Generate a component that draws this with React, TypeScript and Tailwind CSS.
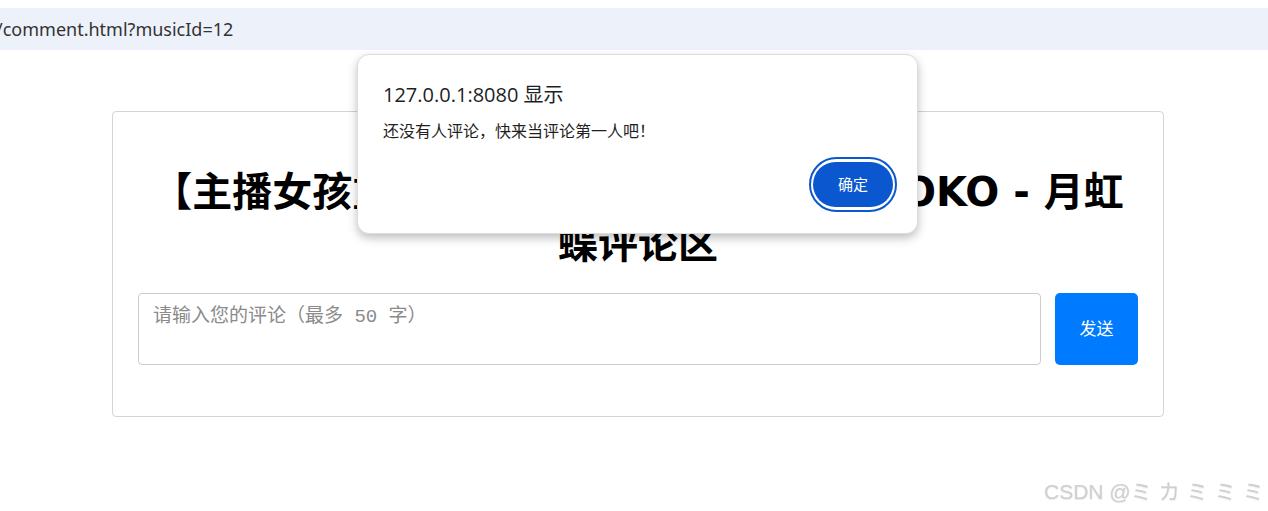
import { useState } from 'react';

export default function App() {
    const [comment, setComment] = useState('');

    return (
        <div className="relative w-[1268px] h-[511px] overflow-hidden bg-white font-['Noto_Sans','Noto_Sans_CJK_SC',sans-serif]">
            {/* address strip */}
            <div className="mt-[8px] h-[42px] bg-[#edf1fa] flex items-center overflow-hidden">
                <span className="-ml-[4px] text-[18px] text-[#333] whitespace-nowrap">/comment.html?musicId=12</span>
            </div>

            {/* comment card */}
            <div className="ml-[112px] mt-[61px] w-[1052px] h-[306px] border border-[#d4d4d4] rounded-[4px] px-[25px] pt-[54px]">
                <h1 className="text-center font-bold text-[40px] leading-[52px] text-black font-['DejaVu_Sans','Noto_Sans_CJK_SC',sans-serif]">
                    【主播女孩重度依赖】OVERDOSE KOTOKO - 月虹
                    <br />
                    蝶评论区
                </h1>
                <div className="mt-[23px] flex gap-[14px]">
                    <textarea
                        value={comment}
                        onChange={(e) => setComment(e.target.value)}
                        placeholder="请输入您的评论（最多 50 字）"
                        className="flex-1 h-[72px] resize-none border border-[#cccccc] rounded-[4px] px-[14px] py-[10px] text-[19px] leading-[26px] placeholder:text-[#8a8a8a] outline-none font-['Liberation_Mono','Noto_Sans_CJK_SC',monospace]"
                    />
                    <button className="w-[83px] h-[72px] bg-[#007bff] text-white text-[17px] rounded-[5px]">发送</button>
                </div>
            </div>

            {/* alert dialog */}
            <div className="absolute left-[357px] top-[54px] w-[561px] h-[180px] bg-white border border-[#dcdcdc] rounded-[12px] shadow-[0_4px_10px_rgba(0,0,0,0.25)] pl-[25px] pr-[20px] pt-[27px] font-['Open_Sans','Noto_Sans_CJK_SC',sans-serif]">
                <div className="text-[20px] leading-[26px] text-[#1f1f1f]">127.0.0.1:8080 显示</div>
                <div className="mt-[12px] text-[16px] leading-[22px] text-[#1f1f1f]">还没有人评论，快来当评论第一人吧！</div>
                <div className="mt-[15px] flex justify-end">
                    <div className="rounded-full border-2 border-[#0b57d0] px-[2px] py-[3px]">
                        <button className="w-[80px] h-[45px] rounded-full bg-[#0b57d0] text-white text-[15px]">确定</button>
                    </div>
                </div>
            </div>

            {/* watermark */}
            <div className="absolute left-[1044px] top-[476px] whitespace-nowrap text-[21px] font-normal text-[#cfcfcf] [text-shadow:0_1px_1px_rgba(0,0,0,0.08)] font-['Liberation_Sans','Noto_Sans_CJK_JP',sans-serif]">
                CSDN @<span className="tracking-[7px]">ミカミミ</span>ミ
            </div>
        </div>
    );
}
